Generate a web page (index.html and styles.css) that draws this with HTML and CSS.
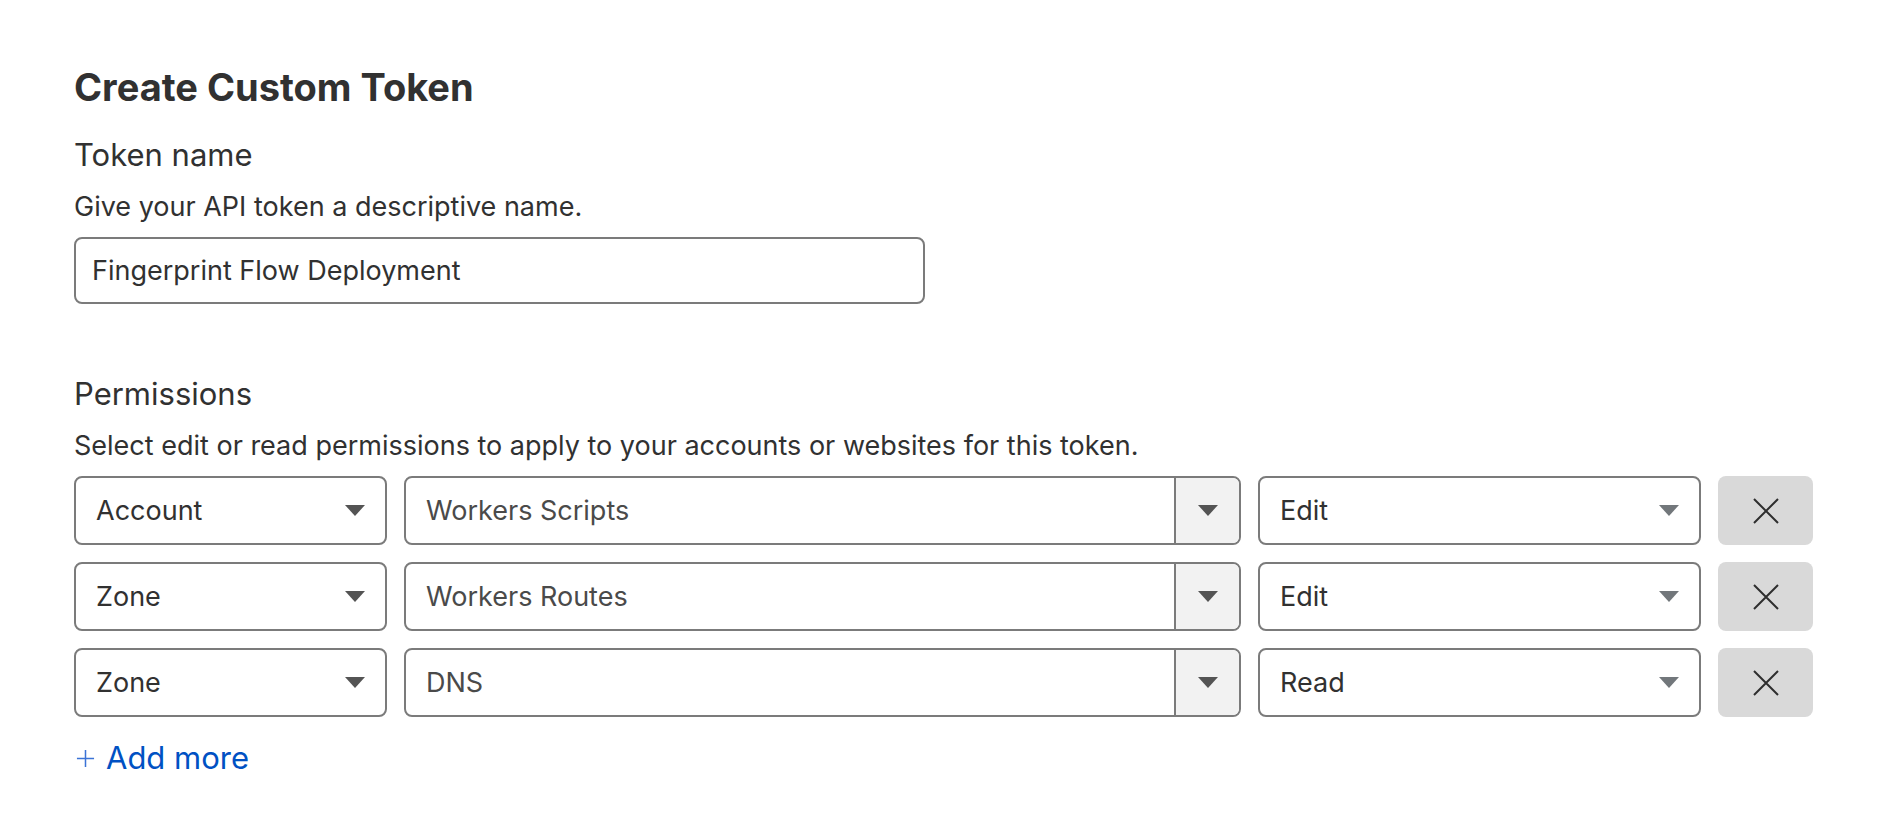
FILE: index.html
```html
<!DOCTYPE html>
<html>
<head>
<meta charset="utf-8">
<link rel="stylesheet" href="styles.css">
</head>
<body>
<main class="page">
  <h1 class="title">Create Custom Token</h1>

  <section class="field">
    <h2 class="label label-first">Token name</h2>
    <p class="desc">Give your API token a descriptive name.</p>
    <div class="input">Fingerprint Flow Deployment</div>
  </section>

  <section class="field">
    <h2 class="label label-perm">Permissions</h2>
    <p class="desc">Select edit or read permissions to apply to your accounts or websites for this token.</p>

    <div class="rows">
      <div class="row">
        <div class="select sel-scope"><span>Account</span><span class="caret caret-dark"></span></div>
        <div class="combo"><span class="combo-text">Workers Scripts</span><span class="combo-btn"><span class="caret caret-dark"></span></span></div>
        <div class="select sel-level"><span>Edit</span><span class="caret caret-light"></span></div>
        <button class="remove" aria-label="Remove"><svg viewBox="0 0 28 28" width="28" height="28"><path d="M2 2 L26 26 M26 2 L2 26" stroke="#2e2e2e" stroke-width="2" fill="none"/></svg></button>
      </div>
      <div class="row">
        <div class="select sel-scope"><span>Zone</span><span class="caret caret-dark"></span></div>
        <div class="combo"><span class="combo-text">Workers Routes</span><span class="combo-btn"><span class="caret caret-dark"></span></span></div>
        <div class="select sel-level"><span>Edit</span><span class="caret caret-light"></span></div>
        <button class="remove" aria-label="Remove"><svg viewBox="0 0 28 28" width="28" height="28"><path d="M2 2 L26 26 M26 2 L2 26" stroke="#2e2e2e" stroke-width="2" fill="none"/></svg></button>
      </div>
      <div class="row">
        <div class="select sel-scope"><span>Zone</span><span class="caret caret-dark"></span></div>
        <div class="combo"><span class="combo-text">DNS</span><span class="combo-btn"><span class="caret caret-dark"></span></span></div>
        <div class="select sel-level"><span>Read</span><span class="caret caret-light"></span></div>
        <button class="remove" aria-label="Remove"><svg viewBox="0 0 28 28" width="28" height="28"><path d="M2 2 L26 26 M26 2 L2 26" stroke="#2e2e2e" stroke-width="2" fill="none"/></svg></button>
      </div>
    </div>

    <a class="add-more" href="#"><svg class="plus" viewBox="0 0 20 20" width="19" height="19"><path d="M10 1 V19 M1 10 H19" stroke="#3b73d6" stroke-width="1.6" fill="none"/></svg><span>Add more</span></a>
  </section>
</main>
</body>
</html>
```

FILE: styles.css
```css
* { box-sizing: border-box; }
html, body { margin: 0; padding: 0; background: #ffffff; }
body {
  font-family: Inter, "Noto Sans", "Liberation Sans", sans-serif;
  color: #313131;
}
.page {
  padding: 64px 74px 0 74px;
}
.title {
  margin: 0;
  font-size: 38px;
  line-height: 46px;
  font-weight: 700;
  color: #313131;
}
.label {
  margin: 0;
  font-size: 31px;
  line-height: 36px;
  font-weight: 400;
  color: #313131;
}
.label-first { margin-top: 27px; }
.label-perm { margin-top: 72px; }
.desc {
  margin: 18px 0 0 0;
  font-size: 27px;
  line-height: 32px;
  color: #313131;
}
.input {
  margin-top: 14px;
  width: 851px;
  height: 67px;
  border: 2px solid #7b7b7b;
  border-radius: 8px;
  padding: 0 16px;
  display: flex;
  align-items: center;
  font-size: 27px;
  color: #313131;
}
.rows {
  margin-top: 14px;
  display: flex;
  flex-direction: column;
  gap: 17px;
}
.row {
  display: flex;
  gap: 17px;
  height: 69px;
}
.select {
  height: 69px;
  border: 2px solid #7b7b7b;
  border-radius: 8px;
  display: flex;
  align-items: center;
  justify-content: space-between;
  padding: 0 20px 0 20px;
  font-size: 27px;
  color: #313131;
}
.sel-scope { width: 313px; }
.sel-level { width: 443px; }
.combo {
  width: 837px;
  height: 69px;
  border: 2px solid #7b7b7b;
  border-radius: 8px;
  display: flex;
  overflow: hidden;
}
.combo-text {
  flex: 1;
  display: flex;
  align-items: center;
  padding-left: 20px;
  font-size: 27px;
  color: #4a4a4a;
}
.combo-btn {
  width: 65px;
  border-left: 2px solid #7b7b7b;
  background: #f2f2f2;
  display: flex;
  align-items: center;
  justify-content: center;
}
.caret {
  width: 0;
  height: 0;
  border-left: 10px solid transparent;
  border-right: 10px solid transparent;
  border-top: 11px solid #555555;
}
.caret-dark { border-top-color: #545454; }
.caret-light { border-top-color: #72777b; }
.remove {
  width: 95px;
  height: 69px;
  border: none;
  border-radius: 8px;
  background: #d9d9d9;
  display: flex;
  align-items: center;
  justify-content: center;
  padding: 0;
}
.add-more {
  margin-top: 23px;
  display: inline-flex;
  align-items: center;
  gap: 11px;
  font-size: 31px;
  line-height: 36px;
  color: #0051c3;
  text-decoration: none;
}
.plus { margin-left: 2px; }
```
